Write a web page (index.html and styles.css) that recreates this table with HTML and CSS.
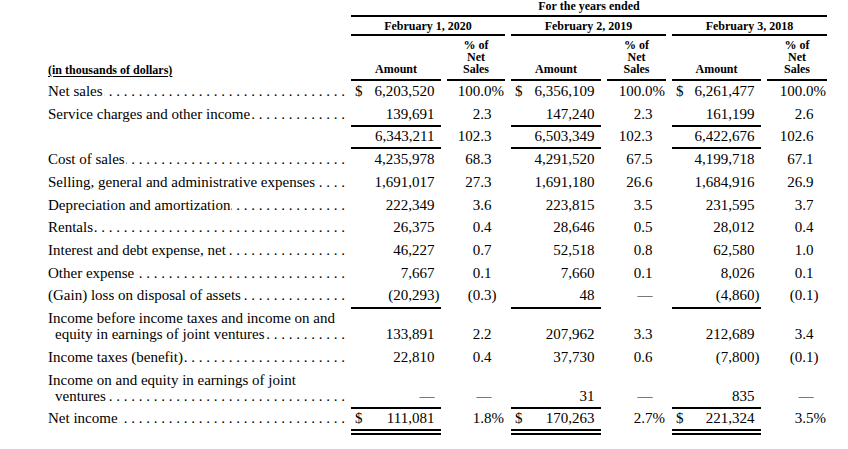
FILE: index.html
```html
<!DOCTYPE html>
<html>
<head>
<meta charset="utf-8">
<title>Statement of Income</title>
<link rel="stylesheet" href="styles.css">
</head>
<body>
<div class="page">
<table class="fin">
  <colgroup>
    <col class="c-lbl"><col class="c-amt1"><col class="c-pct1"><col class="c-amt2"><col class="c-pct2"><col class="c-amt3"><col class="c-pct3">
  </colgroup>
  <thead>
    <tr class="h1">
      <th></th>
      <th colspan="6" class="rule">For the years ended</th>
    </tr>
    <tr class="h2">
      <th></th>
      <th colspan="2" class="rule">February 1, 2020</th>
      <th colspan="2" class="rule">February 2, 2019</th>
      <th colspan="2" class="rule">February 3, 2018</th>
    </tr>
    <tr class="h3">
      <th class="unit"><span>(in thousands of dollars)</span></th>
      <th class="rule">Amount</th>
      <th class="rule">% of<br>Net<br>Sales</th>
      <th class="rule">Amount</th>
      <th class="rule">% of<br>Net<br>Sales</th>
      <th class="rule">Amount</th>
      <th class="rule">% of<br>Net<br>Sales</th>
    </tr>
  </thead>
  <tbody>
    <tr>
      <td class="lbl"><div class="ln"><span>Net sales</span><span class="lead"></span></div></td>
      <td class="amt"><span class="cur">$</span>6,203,520</td>
      <td class="pct">100.0<span class="pc">%</span></td>
      <td class="amt"><span class="cur">$</span>6,356,109</td>
      <td class="pct">100.0<span class="pc">%</span></td>
      <td class="amt"><span class="cur">$</span>6,261,477</td>
      <td class="pct">100.0<span class="pc">%</span></td>
    </tr>
    <tr>
      <td class="lbl"><div class="ln"><span>Service charges and other income</span><span class="lead"></span></div></td>
      <td class="amt rule">139,691</td>
      <td class="pct">2.3</td>
      <td class="amt rule">147,240</td>
      <td class="pct">2.3</td>
      <td class="amt rule">161,199</td>
      <td class="pct">2.6</td>
    </tr>
    <tr>
      <td class="lbl"></td>
      <td class="amt rule">6,343,211</td>
      <td class="pct">102.3</td>
      <td class="amt rule">6,503,349</td>
      <td class="pct">102.3</td>
      <td class="amt rule">6,422,676</td>
      <td class="pct">102.6</td>
    </tr>
    <tr>
      <td class="lbl"><div class="ln"><span>Cost of sales</span><span class="lead"></span></div></td>
      <td class="amt">4,235,978</td>
      <td class="pct">68.3</td>
      <td class="amt">4,291,520</td>
      <td class="pct">67.5</td>
      <td class="amt">4,199,718</td>
      <td class="pct">67.1</td>
    </tr>
    <tr>
      <td class="lbl"><div class="ln"><span>Selling, general and administrative expenses</span><span class="lead"></span></div></td>
      <td class="amt">1,691,017</td>
      <td class="pct">27.3</td>
      <td class="amt">1,691,180</td>
      <td class="pct">26.6</td>
      <td class="amt">1,684,916</td>
      <td class="pct">26.9</td>
    </tr>
    <tr>
      <td class="lbl"><div class="ln"><span>Depreciation and amortization</span><span class="lead"></span></div></td>
      <td class="amt">222,349</td>
      <td class="pct">3.6</td>
      <td class="amt">223,815</td>
      <td class="pct">3.5</td>
      <td class="amt">231,595</td>
      <td class="pct">3.7</td>
    </tr>
    <tr>
      <td class="lbl"><div class="ln"><span>Rentals</span><span class="lead"></span></div></td>
      <td class="amt">26,375</td>
      <td class="pct">0.4</td>
      <td class="amt">28,646</td>
      <td class="pct">0.5</td>
      <td class="amt">28,012</td>
      <td class="pct">0.4</td>
    </tr>
    <tr>
      <td class="lbl"><div class="ln"><span>Interest and debt expense, net</span><span class="lead"></span></div></td>
      <td class="amt">46,227</td>
      <td class="pct">0.7</td>
      <td class="amt">52,518</td>
      <td class="pct">0.8</td>
      <td class="amt">62,580</td>
      <td class="pct">1.0</td>
    </tr>
    <tr>
      <td class="lbl"><div class="ln"><span>Other expense</span><span class="lead"></span></div></td>
      <td class="amt">7,667</td>
      <td class="pct">0.1</td>
      <td class="amt">7,660</td>
      <td class="pct">0.1</td>
      <td class="amt">8,026</td>
      <td class="pct">0.1</td>
    </tr>
    <tr>
      <td class="lbl"><div class="ln"><span>(Gain) loss on disposal of assets</span><span class="lead"></span></div></td>
      <td class="amt rule">(20,293<span class="hang">)</span></td>
      <td class="pct">(0.3<span class="hang">)</span></td>
      <td class="amt rule">48</td>
      <td class="pct">—</td>
      <td class="amt rule">(4,860<span class="hang">)</span></td>
      <td class="pct">(0.1<span class="hang">)</span></td>
    </tr>
    <tr>
      <td class="lbl"><div class="l1">Income before income taxes and income on and</div><div class="ln ind"><span>equity in earnings of joint ventures</span><span class="lead"></span></div></td>
      <td class="amt">133,891</td>
      <td class="pct">2.2</td>
      <td class="amt">207,962</td>
      <td class="pct">3.3</td>
      <td class="amt">212,689</td>
      <td class="pct">3.4</td>
    </tr>
    <tr>
      <td class="lbl"><div class="ln"><span>Income taxes (benefit)</span><span class="lead"></span></div></td>
      <td class="amt">22,810</td>
      <td class="pct">0.4</td>
      <td class="amt">37,730</td>
      <td class="pct">0.6</td>
      <td class="amt">(7,800<span class="hang">)</span></td>
      <td class="pct">(0.1<span class="hang">)</span></td>
    </tr>
    <tr>
      <td class="lbl"><div class="l1">Income on and equity in earnings of joint</div><div class="ln ind"><span>ventures</span><span class="lead"></span></div></td>
      <td class="amt rule">—</td>
      <td class="pct">—</td>
      <td class="amt rule">31</td>
      <td class="pct">—</td>
      <td class="amt rule">835</td>
      <td class="pct">—</td>
    </tr>
    <tr class="total">
      <td class="lbl"><div class="ln"><span>Net income</span><span class="lead"></span></div></td>
      <td class="amt rule"><span class="cur">$</span>111,081</td>
      <td class="pct">1.8<span class="pc">%</span></td>
      <td class="amt rule"><span class="cur">$</span>170,263</td>
      <td class="pct">2.7<span class="pc">%</span></td>
      <td class="amt rule"><span class="cur">$</span>221,324</td>
      <td class="pct">3.5<span class="pc">%</span></td>
    </tr>
  </tbody>
</table>
</div>
</body>
</html>
```

FILE: styles.css
```css
* {
  box-sizing: border-box;
}

html,
body {
  margin: 0;
  padding: 0;
  background: #ffffff;
}

body {
  font-family: "Liberation Serif", "Times New Roman", serif;
  color: #000000;
}

.page {
  padding-left: 42px;
}

.fin {
  border-collapse: separate;
  border-spacing: 6px 0;
  table-layout: fixed;
  width: 791px;
}

.c-lbl { width: 297px; }
.c-amt1 { width: 90px; }
.c-pct1 { width: 58px; }
.c-amt2 { width: 90px; }
.c-pct2 { width: 59px; }
.c-amt3 { width: 89px; }
.c-pct3 { width: 60px; }

/* ---------- header ---------- */
.fin th {
  font-size: 12px;
  font-weight: bold;
  text-align: center;
  vertical-align: bottom;
  padding: 0;
  white-space: nowrap;
}

.fin th.rule {
  border-bottom: 2px solid #000000;
}

.h1 th {
  line-height: 12px;
  padding-bottom: 2.7px;
}

.h2 th {
  line-height: 12px;
  padding: 3.25px 0 2.35px;
}

.h3 th {
  line-height: 12.2px;
  padding: 2.46px 0 3.94px;
}

.h3 th.unit {
  text-align: left;
  padding-bottom: 5.24px;
}

.unit span {
  text-decoration: underline;
  text-underline-offset: 2px;
}

/* ---------- body ---------- */
.fin td {
  font-size: 15px;
  line-height: 16px;
  padding: 1.6px 0 3.15px;
  border-bottom: 2px solid transparent;
  vertical-align: bottom;
  white-space: nowrap;
}

.fin td.amt {
  text-align: right;
  padding-left: 4px;
  padding-right: 6.5px;
}

.fin td.pct {
  text-align: right;
  padding-right: 13.5px;
}

.fin td.rule {
  border-bottom-color: #000000;
}

.cur {
  float: left;
}

.hang {
  margin-right: -5px;
}

.pc {
  margin-right: -12.5px;
}

/* labels with dot leaders */
.ln {
  display: flex;
  align-items: baseline;
}

.ln > span:first-child {
  flex: none;
}

.ln.ind {
  padding-left: 7px;
}

.lead {
  flex: 1 1 auto;
  min-width: 0;
  overflow: hidden;
  display: flex;
  justify-content: flex-end;
  margin-left: 1px;
}

.lead::before {
  content: ". . . . . . . . . . . . . . . . . . . . . . . . . . . . . . . . . . . . . . . . . . . . . . . . . . .";
  flex: none;
  white-space: pre;
}

/* total row */
.fin tr.total td {
  padding-bottom: 2.3px;
  border-bottom: 6px double transparent;
}

.fin tr.total td.rule {
  border-bottom-color: #000000;
}
```
